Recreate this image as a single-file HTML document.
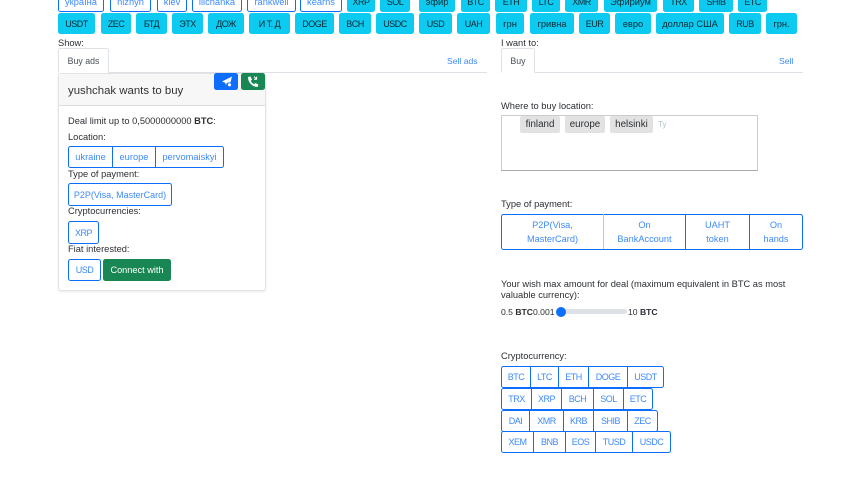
<!DOCTYPE html>
<html><head><meta charset="utf-8"><style>
html,body{margin:0;padding:0;background:#fff}
body{position:relative;width:865px;height:477px;overflow:hidden;font-family:"Liberation Sans","Noto Sans CJK SC",sans-serif;font-size:9.3px;color:#2b2f33}
.a,.c,.o,.g,.t{position:absolute;box-sizing:border-box}
.c,.o,.g{display:flex;align-items:center;justify-content:center;text-align:center;white-space:nowrap;line-height:14px;font-size:9.3px}
.c{background:#0dcaf0;color:#0a2a33;border-radius:2.5px;height:21px;border:1px solid #0dcaf0}
.o{border:1px solid #0d6efd;color:#3d8afd;border-radius:2.5px;background:#fff}
.g{border:1px solid #0d6efd;color:#3d8afd;background:#fff;margin:0}
.x{font-size:9px;letter-spacing:-.5px}
.t{white-space:nowrap;line-height:12px}
.tag{position:absolute;top:116px;height:17px;background:#e2e2e2;border-radius:2px;color:#2b2f33;display:flex;align-items:center;justify-content:center;font-size:9.8px}
.n{border:0;background:none}
</style></head><body>

<div class="o" style="left:58px;top:-9px;width:46px;height:21px">україна</div>
<div class="o" style="left:110px;top:-9px;width:41px;height:21px">nizhyn</div>
<div class="o" style="left:157px;top:-9px;width:30px;height:21px">kiev</div>
<div class="o" style="left:192px;top:-9px;width:50px;height:21px">ilichanka</div>
<div class="o" style="left:247px;top:-9px;width:49px;height:21px">rankweil</div>
<div class="o" style="left:300px;top:-9px;width:42px;height:21px">kearns</div>
<div class="c x" style="left:347px;top:-9px;width:28px">XRP</div>
<div class="c x" style="left:380px;top:-9px;width:30px">SOL</div>
<div class="c" style="left:419px;top:-9px;width:36px">эфир</div>
<div class="c x" style="left:461px;top:-9px;width:29px">BTC</div>
<div class="c x" style="left:495px;top:-9px;width:32px">ETH</div>
<div class="c x" style="left:532px;top:-9px;width:28px">LTC</div>
<div class="c x" style="left:565px;top:-9px;width:33px">XMR</div>
<div class="c" style="left:604px;top:-9px;width:53px">Эфириум</div>
<div class="c x" style="left:663px;top:-9px;width:31px">TRX</div>
<div class="c x" style="left:699px;top:-9px;width:34px">SHIB</div>
<div class="c x" style="left:738px;top:-9px;width:29px">ETC</div>

<div class="c x" style="left:58px;top:13px;width:37px">USDT</div>
<div class="c x" style="left:101px;top:13px;width:30px">ZEC</div>
<div class="c x" style="left:136px;top:13px;width:31px">БТД</div>
<div class="c x" style="left:172px;top:13px;width:31px">ЭТХ</div>
<div class="c x" style="left:208px;top:13px;width:36px">ДОЖ</div>
<div class="c x" style="left:249px;top:13px;width:41px">И Т. Д</div>
<div class="c x" style="left:295px;top:13px;width:39px">DOGE</div>
<div class="c x" style="left:339px;top:13px;width:32px">BCH</div>
<div class="c x" style="left:376px;top:13px;width:38px">USDC</div>
<div class="c x" style="left:419px;top:13px;width:33px">USD</div>
<div class="c x" style="left:457px;top:13px;width:33px">UAH</div>
<div class="c" style="left:496px;top:13px;width:28px">грн</div>
<div class="c" style="left:530px;top:13px;width:44px">гривна</div>
<div class="c x" style="left:579px;top:13px;width:31px">EUR</div>
<div class="c" style="left:615px;top:13px;width:36px">евро</div>
<div class="c" style="left:656px;top:13px;width:68px">доллар США</div>
<div class="c x" style="left:729px;top:13px;width:32px">RUB</div>
<div class="c" style="left:766px;top:13px;width:31px">грн.</div>

<div class="t" style="left:58px;top:37px">Show:</div>
<div class="a" style="left:58px;top:72px;width:429px;height:1px;background:#dee2e6"></div>
<div class="a" style="left:58px;top:48px;width:51px;height:25px;border:1px solid #dee2e6;border-bottom:1px solid #fff;border-radius:2.5px 2.5px 0 0;background:#fff;color:#495057;display:flex;align-items:center;justify-content:center;font-size:8.8px">Buy ads</div>
<div class="t" style="left:447px;top:55px;color:#3d8afd;font-size:8.6px">Sell ads</div>

<div class="t" style="left:501px;top:37px">I want to:</div>
<div class="a" style="left:501px;top:72px;width:302px;height:1px;background:#dee2e6"></div>
<div class="a" style="left:501px;top:48px;width:34px;height:25px;border:1px solid #dee2e6;border-bottom:1px solid #fff;border-radius:2.5px 2.5px 0 0;background:#fff;color:#495057;display:flex;align-items:center;justify-content:center;font-size:8.8px">Buy</div>
<div class="t" style="left:779px;top:55px;color:#3d8afd;font-size:8.6px">Sell</div>

<!-- Card -->
<div class="a" style="left:58px;top:73px;width:208px;height:218px;border:1px solid #e3e3e3;border-radius:3px;background:#fff;box-shadow:0 1px 2px rgba(0,0,0,.08)"></div>
<div class="a" style="left:59px;top:74px;width:206px;height:32px;background:#f7f7f7;border-bottom:1px solid #dcdcdc;border-radius:3px 3px 0 0"></div>
<div class="t" style="left:68px;top:84px;font-size:11.4px;line-height:14px;color:#333">yushchak wants to buy</div>
<div class="a" style="left:214px;top:73px;width:24px;height:17px;background:#0d6efd;border-radius:2.5px"><svg width="24" height="17" viewBox="0 0 24 17"><path d="M8 8.5L18 3.5L16 11L13 9.5L12 12L11 9.6ZM11 9.6L16.5 5.2L13 9.5" fill="#fff"/><circle cx="15.5" cy="11.8" r="2" fill="#fff" stroke="#0d6efd" stroke-width=".8"/></svg></div>
<div class="a" style="left:241px;top:73px;width:24px;height:17px;background:#198754;border-radius:2.5px"><svg width="24" height="17" viewBox="0 0 24 17"><path d="M7.2 4L9.4 3.4L11 6.6L9.8 7.8C10.4 9.4 11.6 10.6 13.2 11.2L14.4 10L17.4 11.6L16.8 13.8C12 14.4 6.4 9.4 7.2 4Z" fill="#fff"/><path d="M13 3.6L15.4 6M15.6 3.6V6.2H13" fill="none" stroke="#fff" stroke-width="1"/></svg></div>

<div class="t" style="left:68px;top:115px">Deal limit up to 0,5000000000 <b>BTC</b>:</div>
<div class="t" style="left:68px;top:131px">Location:</div>
<div class="o" style="left:68px;top:146px;width:45px;height:22px;border-radius:2.5px 0 0 2.5px">ukraine</div>
<div class="g" style="left:112px;top:146px;width:44px;height:22px">europe</div>
<div class="o" style="left:155px;top:146px;width:69px;height:22px;border-radius:0 2.5px 2.5px 0">pervomaiskyi</div>
<div class="t" style="left:68px;top:168px">Type of payment:</div>
<div class="o" style="left:68px;top:183px;width:104px;height:23px;font-size:9px">P2P(Visa, MasterCard)</div>
<div class="t" style="left:68px;top:205px">Cryptocurrencies:</div>
<div class="o x" style="left:68px;top:221px;width:31px;height:23px">XRP</div>
<div class="t" style="left:68px;top:243px">Fiat interested:</div>
<div class="o x" style="left:68px;top:259px;width:33px;height:22px">USD</div>
<div class="a" style="left:103px;top:259px;width:68px;height:22px;background:#198754;border-radius:2.5px;color:#fff;display:flex;align-items:center;justify-content:center;font-size:9.2px;white-space:nowrap">Connect with</div>

<!-- Right -->
<div class="t" style="left:501px;top:100px">Where to buy location:</div>
<div class="a" style="left:501px;top:115px;width:257px;height:56px;border:1px solid #ccc;border-bottom-color:#a8a8a8"></div>
<div class="tag" style="left:520px;width:40px">finland</div>
<div class="tag" style="left:565px;width:40px">europe</div>
<div class="tag" style="left:610px;width:43px">helsinki</div>
<div class="t" style="left:658px;top:119px;color:#b0c4c8;font-size:8px">Ty</div>

<div class="t" style="left:501px;top:198px">Type of payment:</div>
<div class="a" style="left:501px;top:214px;width:302px;height:35.5px;border:1px solid #0d6efd;border-radius:2.5px"></div>
<div class="g n" style="left:502px;top:218px;width:101px;height:28px;white-space:normal;font-size:9.2px">P2P(Visa,<br>MasterCard)</div>
<div class="g n" style="left:604px;top:218px;width:81px;height:28px;font-size:9.2px">On<br>BankAccount</div>
<div class="g n" style="left:686px;top:218px;width:63px;height:28px;font-size:9.2px">UAHT<br>token</div>
<div class="g n" style="left:750px;top:218px;width:52px;height:28px;font-size:9.2px">On<br>hands</div>
<div class="a" style="left:603px;top:214px;width:1px;height:35px;background:#a9ccfe"></div>
<div class="a" style="left:685px;top:214px;width:1px;height:35px;background:#0d6efd"></div>
<div class="a" style="left:749px;top:214px;width:1px;height:35px;background:#0d6efd"></div>

<div class="t" style="left:501px;top:278px">Your wish max amount for deal (maximum equivalent in BTC as most</div>
<div class="t" style="left:501px;top:289px">valuable currency):</div>
<div class="t" style="left:501px;top:306px;font-size:8.6px">0.5 <b>BTC</b>0.001</div>
<div class="a" style="left:556px;top:309px;width:71px;height:5px;background:#dee2e6;border-radius:3px"></div>
<div class="a" style="left:556px;top:306.5px;width:10px;height:10px;background:#0d6efd;border-radius:50%"></div>
<div class="t" style="left:628px;top:306px;font-size:8.6px">10 <b>BTC</b></div>

<div class="t" style="left:501px;top:350px">Cryptocurrency:</div>

<div class="g x" style="left:501px;top:366px;width:30px;height:22px;border-radius:2.5px 0 0 2.5px">BTC</div>
<div class="g x" style="left:530px;top:366px;width:29px;height:22px">LTC</div>
<div class="g x" style="left:558px;top:366px;width:31px;height:22px">ETH</div>
<div class="g x" style="left:588px;top:366px;width:40px;height:22px">DOGE</div>
<div class="g x" style="left:627px;top:366px;width:37px;height:22px;border-radius:0 2.5px 2.5px 0">USDT</div>

<div class="g x" style="left:501px;top:388px;width:31px;height:22px;border-radius:2.5px 0 0 2.5px">TRX</div>
<div class="g x" style="left:531px;top:388px;width:31px;height:22px">XRP</div>
<div class="g x" style="left:561px;top:388px;width:33px;height:22px">BCH</div>
<div class="g x" style="left:593px;top:388px;width:31px;height:22px">SOL</div>
<div class="g x" style="left:623px;top:388px;width:30px;height:22px;border-radius:0 2.5px 2.5px 0">ETC</div>

<div class="g x" style="left:501px;top:410px;width:29px;height:22px;border-radius:2.5px 0 0 2.5px">DAI</div>
<div class="g x" style="left:529px;top:410px;width:35px;height:22px">XMR</div>
<div class="g x" style="left:563px;top:410px;width:31px;height:22px">KRB</div>
<div class="g x" style="left:593px;top:410px;width:35px;height:22px">SHIB</div>
<div class="g x" style="left:627px;top:410px;width:31px;height:22px;border-radius:0 2.5px 2.5px 0">ZEC</div>

<div class="g x" style="left:501px;top:431px;width:33px;height:22px;border-radius:2.5px 0 0 2.5px">XEM</div>
<div class="g x" style="left:533px;top:431px;width:33px;height:22px">BNB</div>
<div class="g x" style="left:565px;top:431px;width:31px;height:22px">EOS</div>
<div class="g x" style="left:595px;top:431px;width:38px;height:22px">TUSD</div>
<div class="g x" style="left:632px;top:431px;width:39px;height:22px;border-radius:0 2.5px 2.5px 0">USDC</div>

</body></html>
